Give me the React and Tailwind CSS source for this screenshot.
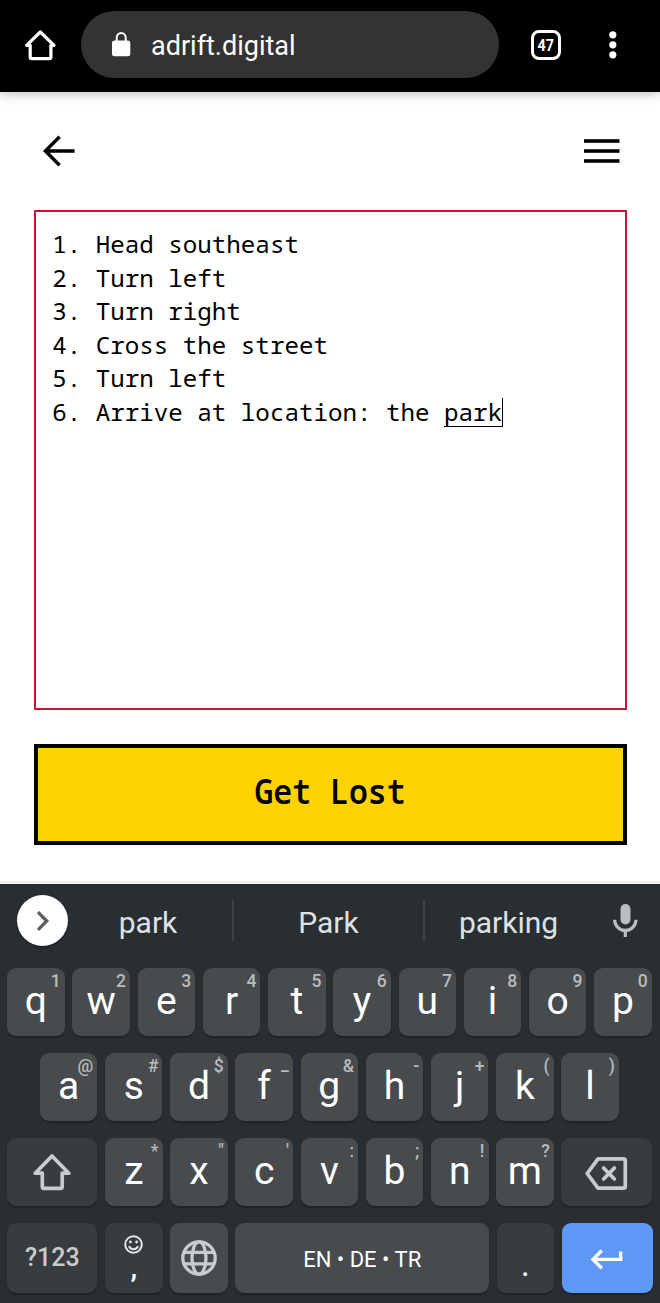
const row1 = [["q", "1"], ["w", "2"], ["e", "3"], ["r", "4"], ["t", "5"], ["y", "6"], ["u", "7"], ["i", "8"], ["o", "9"], ["p", "0"]];
const row2 = [["a", "@"], ["s", "#"], ["d", "$"], ["f", "_"], ["g", "&"], ["h", "-"], ["j", "+"], ["k", "("], ["l", ")"]];
const row3 = [["z", "*"], ["x", '"'], ["c", "'"], ["v", ":"], ["b", ";"], ["n", "!"], ["m", "?"]];

function Letter({ k }) {
  return (
    <div className="relative h-[68px] w-[57.5px] shrink-0 rounded-[9px] bg-[#474b4e] text-center text-[39px] leading-[66px] text-white shadow-[0_1.5px_1px_#1f2427]">
      {k[0]}
      <span className={`absolute right-[4px] text-[17.5px] font-medium leading-[26px] text-[#b9bbbc] ${k[1] === "_" ? "-top-[2px]" : "top-0"}`}>{k[1]}</span>
    </div>
  );
}

function DarkKey({ className = "", children }) {
  return (
    <div className={`flex shrink-0 items-center rounded-[9px] bg-[#373c40] shadow-[0_1.5px_1px_#1f2427] ${className}`}>{children}</div>
  );
}

function BrowserBar() {
  return (
    <header className="relative flex h-[92px] shrink-0 items-center bg-black pb-[3px] pl-[24px] text-white shadow-[0_1px_11px_rgba(0,0,0,0.3)]">
      <svg className="mt-[1px] h-[34px] w-[34px] shrink-0" viewBox="0 0 34 34" fill="none" stroke="#fff" strokeWidth="3.2" strokeLinejoin="round">
        <path d="M6.2 17.3H2.6L16.3 4 30 17.3H26.9V29.2Q26.9 30.6 25.5 30.6H7.7Q6.2 30.6 6.2 29.2Z" />
      </svg>
      <div className="ml-[23px] flex h-[67.5px] w-[417.5px] items-center rounded-full bg-[#333] pl-[31px]">
        <svg className="h-[25px] w-[19px]" viewBox="0 0 19 25">
          <rect x="0" y="8.5" width="18.3" height="15.7" rx="2.5" fill="#fff" />
          <path d="M4.7 9V5.6a4.5 4.5 0 0 1 9 0V9" fill="none" stroke="#fff" strokeWidth="2" />
        </svg>
        <span className="ml-[20px] pt-[2px] text-[27px] leading-[32px]">adrift.digital</span>
      </div>
      <div className="ml-[32px] mt-[1px] flex h-[30.5px] w-[30.5px] items-center justify-center rounded-[8px] border-[3.3px] border-white">
        <span className="scale-x-[0.84] text-[17px] font-bold leading-none">47</span>
      </div>
      <svg className="ml-[46px] h-[30px] w-[12px]" viewBox="0 0 12 30" fill="#fff">
        <circle cx="5.8" cy="4.8" r="3.6" /><circle cx="5.8" cy="14.8" r="3.6" /><circle cx="5.8" cy="24.8" r="3.6" />
      </svg>
    </header>
  );
}

function Page() {
  return (
    <main className="flex h-[789px] shrink-0 flex-col px-[33.5px]">
      <div className="flex h-[118px] items-center justify-between pl-[8px] pr-[7px]">
        <svg className="h-[34px] w-[34px]" viewBox="0 0 34 34" fill="none" stroke="#000" strokeWidth="3.4">
          <path d="M17.6 2.8 3.4 17 17.6 31.2M3 17H32.6" />
        </svg>
        <svg className="h-[24px] w-[35.5px]" viewBox="0 0 35.5 24" fill="#000">
          <rect y="0.2" width="35.5" height="3.6" /><rect y="10.2" width="35.5" height="3.6" /><rect y="20.2" width="35.5" height="3.6" />
        </svg>
      </div>
      <div className="h-[500px] border-2 border-[#ce1236] pl-[16.7px] pt-[15px] font-['Noto_Sans_Mono','DejaVu_Sans_Mono',monospace] text-[24.2px] leading-[33.6px] text-black">
        <div>1. Head southeast</div>
        <div>2. Turn left</div>
        <div>3. Turn right</div>
        <div>4. Cross the street</div>
        <div>5. Turn left</div>
        <div className="flex whitespace-pre">6. Arrive at location: the <span className="mt-[3px] h-[29px] border-b-[1.5px] border-r-[1.5px] border-black leading-[28px]">park</span></div>
      </div>
      <button className="mt-[34px] flex h-[101px] items-center justify-center border-4 border-black bg-[#ffd203] pb-[6px] font-['Noto_Sans_Mono','DejaVu_Sans_Mono',monospace] text-[35px] font-semibold text-black">
        <span className="scale-x-[0.9]">Get Lost</span>
      </button>
    </main>
  );
}

function Suggestions() {
  return (
    <div className="flex h-[84px] items-start pl-[17px] text-[30px] leading-[77px] text-[#dfe1e2]">
      <div className="mt-[11px] flex h-[51px] w-[51px] shrink-0 items-center justify-center rounded-full bg-white shadow-[0_1px_2px_#15181a]">
        <svg className="h-[22px] w-[14px]" viewBox="0 0 14 22" fill="none" stroke="#5c5e60" strokeWidth="3.3"><path d="M2 2.2 10.7 11 2 19.8" /></svg>
      </div>
      <div className="ml-[-4px] w-[168px] text-center">park</div>
      <div className="mt-[16px] h-[41px] w-[2px] shrink-0 bg-[#3f4346]" />
      <div className="w-[189px] text-center">Park</div>
      <div className="mt-[16px] h-[41px] w-[2px] shrink-0 bg-[#3f4346]" />
      <div className="w-[167px] text-center">parking</div>
      <svg className="ml-[20px] mt-[20px] h-[34px] w-[26px]" viewBox="0 0 26 34">
        <rect x="8.5" y="0" width="10" height="20.5" rx="5" fill="#bbbdbe" />
        <path d="M2.6 15.7a10.7 10.7 0 0 0 21.4 0M13.3 26V33" fill="none" stroke="#bbbdbe" strokeWidth="3.2" />
      </svg>
    </div>
  );
}

function Keyboard() {
  return (
    <section className="flex h-[419px] shrink-0 flex-col bg-[#292e32]">
      <Suggestions />
      <div className="flex flex-col gap-[17px] px-[7.2px]">
        <div className="flex gap-[7.73px]">{row1.map((k) => <Letter key={k[0]} k={k} />)}</div>
        <div className="flex gap-[7.7px] pl-[32.6px]">{row2.map((k) => <Letter key={k[0]} k={k} />)}</div>
        <div className="flex gap-[7.7px]">
          <DarkKey className="h-[68px] w-[90.2px] justify-center">
            <svg className="h-[38px] w-[38px]" viewBox="0 0 38 38" fill="none" stroke="#c9cbcc" strokeWidth="3.7" strokeLinejoin="round"><path d="M19 3 35.8 20.2H29.2V33.8Q29.2 35.3 27.7 35.3H10.8Q9.3 35.3 9.3 33.8V20.2H2.2Z" /></svg>
          </DarkKey>
          {row3.map((k) => <Letter key={k[0]} k={k} />)}
          <DarkKey className="h-[68px] w-[91px] justify-center">
            <svg className="mt-[3px] h-[36px] w-[44px]" viewBox="0 0 44 36" fill="none" stroke="#c9cbcc" strokeWidth="3.7" strokeLinejoin="round"><path d="M13 2.9H38.3a2 2 0 0 1 2 2V30.2a2 2 0 0 1-2 2H13L2.2 17.5Z" /><path strokeLinecap="round" d="M18.6 12 29.4 23M29.4 12 18.6 23" /></svg>
          </DarkKey>
        </div>
        <div className="flex gap-[7.7px]">
          <DarkKey className="h-[70px] w-[90.2px] justify-center text-[25px] font-medium text-[#c9cbcc]">?123</DarkKey>
          <DarkKey className="h-[70px] w-[57.5px] flex-col pt-[12px] text-[#e4e5e6]">
            <svg className="h-[19px] w-[19px] shrink-0" viewBox="0 0 19 19" fill="none" stroke="currentColor" strokeWidth="2"><circle cx="9.5" cy="9.5" r="8.3" /><path d="M5 11.2a4.8 4.8 0 0 0 9 0" /><circle cx="6.4" cy="7" r="1.4" fill="currentColor" stroke="none" /><circle cx="12.6" cy="7" r="1.4" fill="currentColor" stroke="none" /></svg>
            <span className="mt-[-5px] text-[30px] font-medium leading-[36px] text-white">,</span>
          </DarkKey>
          <div className="flex h-[70px] w-[57.5px] items-center justify-center rounded-[9px] bg-[#474b4e] shadow-[0_1.5px_1px_#1f2427]">
            <svg className="h-[36px] w-[36px]" viewBox="0 0 36 36" fill="none" stroke="#c9cbcc" strokeWidth="3.3"><circle cx="18" cy="18" r="16.2" /><ellipse cx="18" cy="18" rx="7" ry="16.2" /><path d="M3.5 12.4H32.5M3.5 23.8H32.5" /></svg>
          </div>
          <div className="flex h-[70px] w-[253.7px] items-center justify-center rounded-[9px] bg-[#474b4e] pt-[2px] text-[22px] text-white shadow-[0_1.5px_1px_#1f2427]">EN • DE • TR</div>
          <DarkKey className="h-[70px] w-[57.5px] justify-center pt-[13px] text-[33px] text-white">.</DarkKey>
          <div className="flex h-[70px] w-[91px] items-center justify-center rounded-[9px] bg-[#5e97f6] shadow-[0_1.5px_1px_#1f2427]">
            <svg className="mt-[3px] h-[22px] w-[34px]" viewBox="0 0 34 22" fill="none" stroke="#fff" strokeWidth="3.4"><path d="M11.8 1.5 3 10.4 11.8 19.3M3 10.4H30.7V2.4" /></svg>
          </div>
        </div>
      </div>
    </section>
  );
}

export default function App() {
  return (
    <div className="flex h-[1303px] w-[660px] flex-col overflow-hidden bg-white font-[Roboto,sans-serif]">
      <BrowserBar />
      <Page />
      <div className="h-[3px] shrink-0 bg-[#f1f1f1]" />
      <Keyboard />
    </div>
  );
}
